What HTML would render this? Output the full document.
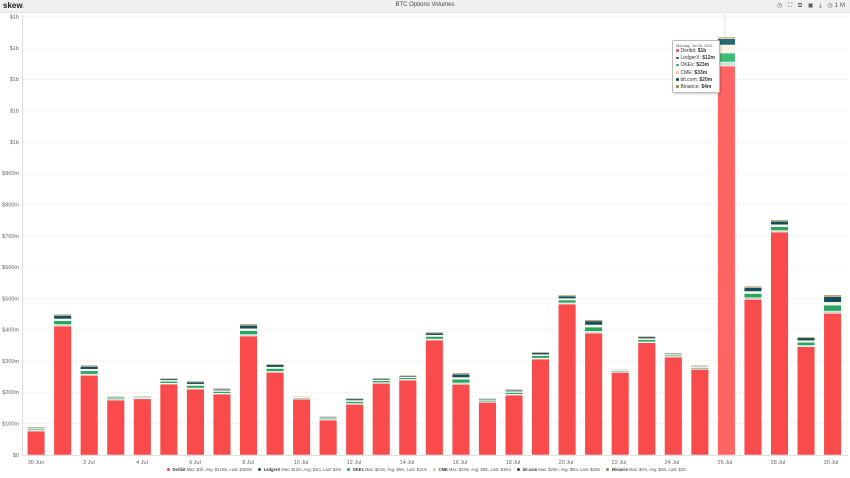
<!DOCTYPE html>
<html><head><meta charset="utf-8"><style>
html,body{margin:0;padding:0;width:850px;height:478px;overflow:hidden;background:#fff;font-family:"Liberation Sans",sans-serif;}
#hdr{position:absolute;left:0;top:0;width:850px;height:12px;background:#f0f0f0;border-bottom:1px solid #e4e4e4;}
#logo{position:absolute;left:3px;top:1px;font-size:8px;font-weight:bold;color:#222;}
#logo span{color:#e8a93a;}
#title{position:absolute;left:0;width:850px;top:2px;text-align:center;font-size:6px;color:#444;}
#icons{position:absolute;right:3px;top:2px;font-size:6px;color:#555;letter-spacing:2px;}
svg{position:absolute;left:0;top:0;}
#legend{position:absolute;left:162px;top:466.5px;font-size:4.1px;color:#555;white-space:nowrap;}
#legend b{color:#333;}
#legend i{display:inline-block;width:3px;height:3px;border-radius:50%;margin:0 2.5px 0 5px;vertical-align:middle;}
#tip{position:absolute;left:672px;top:40px;width:48px;height:53px;background:rgba(255,255,255,0.96);border:1px solid #bbb;border-radius:2px;box-shadow:1px 1px 2px rgba(0,0,0,0.2);font-size:5px;color:#333;padding:2px 3px;box-sizing:border-box;line-height:7.2px;white-space:nowrap;}
#tip div:first-child{font-size:3.9px;line-height:5px;color:#555;}
#tip i{display:inline-block;width:2.5px;height:2.5px;border-radius:50%;margin-right:2px;vertical-align:middle;}
</style></head><body>
<div id="hdr"><div id="logo">skew<span>.</span></div><div id="title">BTC Options Volumes</div><div id="icons">◷ ⛶ ⧉ ▣ ⤓ ◷1M</div></div>
<svg id="s" width="850" height="478" xmlns="http://www.w3.org/2000/svg">
<g font-size="5.5" fill="#666" text-anchor="end" font-family="Liberation Sans, sans-serif">
<text x="19" y="18.5">$1b</text><text x="19" y="50">$1b</text><text x="19" y="81">$1b</text><text x="19" y="112.5">$1b</text><text x="19" y="144">$1b</text>
<text x="19" y="175">$900m</text><text x="19" y="206.5">$800m</text><text x="19" y="238">$700m</text><text x="19" y="269">$600m</text><text x="19" y="300.5">$500m</text><text x="19" y="331.5">$400m</text><text x="19" y="363">$300m</text><text x="19" y="394">$200m</text><text x="19" y="425.5">$100m</text><text x="19" y="457">$0</text>
</g>
<g font-size="5.5" fill="#666" text-anchor="middle" font-family="Liberation Sans, sans-serif">
<text x="36" y="464">30 Jun</text><text x="89" y="464">2 Jul</text><text x="142" y="464">4 Jul</text><text x="195" y="464">6 Jul</text><text x="248" y="464">8 Jul</text><text x="301" y="464">10 Jul</text><text x="354" y="464">12 Jul</text><text x="407" y="464">14 Jul</text><text x="460" y="464">16 Jul</text><text x="513" y="464">18 Jul</text><text x="566" y="464">20 Jul</text><text x="619" y="464">22 Jul</text><text x="672" y="464">24 Jul</text><text x="725" y="464">26 Jul</text><text x="778" y="464">28 Jul</text><text x="831" y="464">30 Jul</text>
</g>
</svg>
<div id="tip"><div>Monday, Jul 26, 2021</div>
<div><i style="background:#f94b4b"></i>Deribit: <b>$1b</b></div>
<div><i style="background:#1e5b3a"></i>LedgerX: <b>$12m</b></div>
<div><i style="background:#27a660"></i>OKEx: <b>$23m</b></div>
<div><i style="background:#f3c98b"></i>CME: <b>$33m</b></div>
<div><i style="background:#174e5c"></i>bit.com: <b>$20m</b></div>
<div><i style="background:#a8813a"></i>Binance: <b>$4m</b></div></div>
<div id="legend"><i style="background:#f94b4b"></i><b>Deribit</b> Max: $1b, Avg: $318m, Last: $453m <i style="background:#1e5b3a"></i><b>LedgerX</b> Max: $12m, Avg: $4m, Last: $4m <i style="background:#27a660"></i><b>OKEx</b> Max: $23m, Avg: $8m, Last: $14m <i style="background:#f3c98b"></i><b>CME</b> Max: $33m, Avg: $8m, Last: $16m <i style="background:#174e5c"></i><b>bit.com</b> Max: $25m, Avg: $8m, Last: $25m <i style="background:#a8813a"></i><b>Binance</b> Max: $4m, Avg: $2m, Last: $2m</div>
<script>
var s=document.getElementById('s'),NS='http://www.w3.org/2000/svg';
function l(x1,y1,x2,y2,c,d){var e=document.createElementNS(NS,'line');e.setAttribute('x1',x1);e.setAttribute('y1',y1);e.setAttribute('x2',x2);e.setAttribute('y2',y2);e.setAttribute('stroke',c);e.setAttribute('stroke-width','0.7');if(d)e.setAttribute('stroke-dasharray',d);s.appendChild(e);}
var grid=[16.9,48.2,79.5,110.8,142,173.3,204.6,235.9,267.2,298.5,329.8,361,392.3,423.6];
var B=[[426.7,431],[314.3,326],[365.3,375.3],[396,400],[395.7,398.7],[378,384],[381,389],[388.3,394],[324,336],[363.7,372.3],[396,399],[416,420],[398,404.3],[377.7,383.3],[375,380],[332,340],[373,384.3],[398,402.3],[389.3,395],[351.7,359],[295,304],[319.7,333],[369,372.3],[336,342.7],[352.7,357],[365.3,369.3],[37.5,66],[286.3,299.3],[220,232],[336.7,346.7],[295,313.3]];
var g=document.createElementNS(NS,'g');
B.forEach(function(b,i){
 var x=27.3+i*26.55,w=17.6,top=b[0],red=b[1],rest=red-top;
 var red_c=(i==26)?'#ff6464':'#f94b4b';
 var segs=[[red,455-red,red_c],[red-rest*0.12,rest*0.12,'#c9d6cc'],[red-rest*0.45,rest*0.33,'#27a660'],[red-rest*0.6,rest*0.15,'#fdf3e0'],[red-rest*0.95,rest*0.35,'#174e5c'],[top,rest*0.05+0.6,'#a8813a']];
 if(i==26){segs=[[66,389,red_c],[62,4,'#cfe3d5'],[53,9,'#3cbc78'],[45,8,'#fdf6e6'],[38.5,6.5,'#236a72'],[37,1.5,'#c9a040']];}
 segs.forEach(function(q){var e=document.createElementNS(NS,'rect');e.setAttribute('x',x);e.setAttribute('y',q[0]);e.setAttribute('width',w);e.setAttribute('height',Math.max(q[1],0.5));e.setAttribute('fill',q[2]);e.setAttribute('stroke','#fff');e.setAttribute('stroke-width','0.5');g.appendChild(e);});
});
grid.forEach(function(y){l(23,y,848,y,'#e3e3e3','2,2');});
l(725,13,725,455,'#d8d8d8');
s.appendChild(g);
l(22.5,15,22.5,455,'#cccccc');
l(22,455.3,848,455.3,'#cccccc');
</script>
</body></html>
